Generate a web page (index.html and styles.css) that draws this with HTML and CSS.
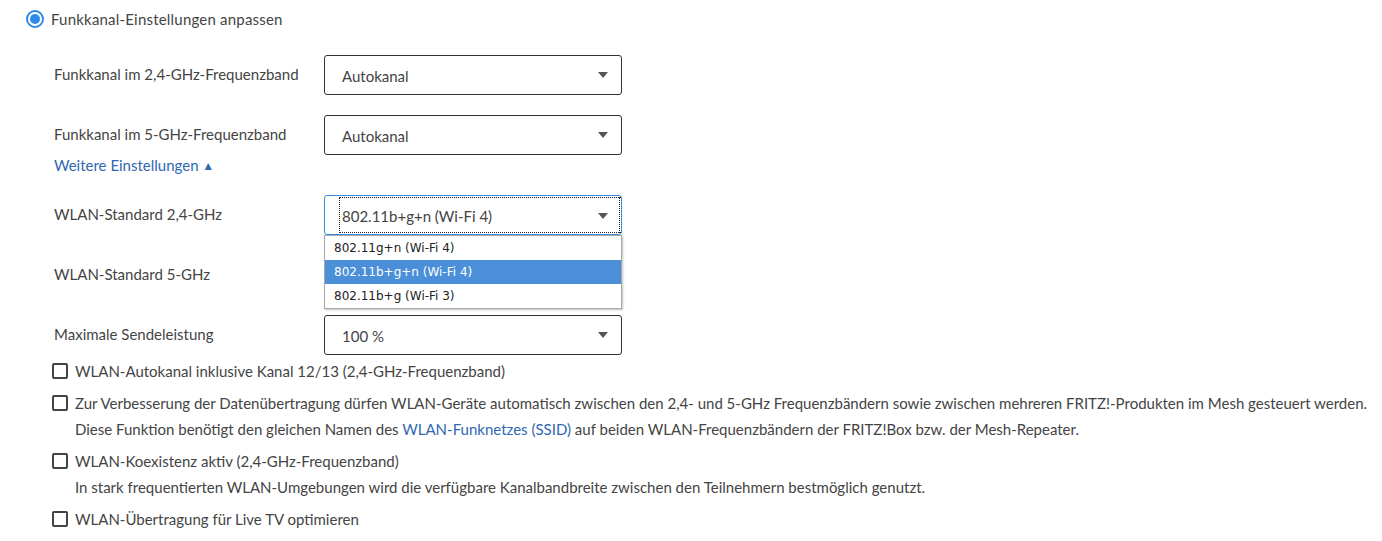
FILE: index.html
```html
<!DOCTYPE html>
<html lang="de">
<head>
<meta charset="utf-8">
<title>WLAN Funkkanal</title>
<link rel="stylesheet" href="styles.css">
</head>
<body>
<div class="page">
  <label class="radio-row">
    <span class="radio"><span class="radio-dot"></span></span>
    <span class="radio-text">Funkkanal-Einstellungen anpassen</span>
  </label>

  <div class="settings">
    <div class="row">
      <span class="label">Funkkanal im 2,4-GHz-Frequenzband</span>
      <div class="select"><span class="select-value">Autokanal</span><span class="arrow"></span></div>
    </div>
    <div class="row">
      <span class="label">Funkkanal im 5-GHz-Frequenzband</span>
      <div class="select"><span class="select-value">Autokanal</span><span class="arrow"></span></div>
    </div>
    <a class="more-link" href="#">Weitere Einstellungen <span class="up">&#9650;</span></a>
    <div class="row row-open">
      <span class="label">WLAN-Standard 2,4-GHz</span>
      <div class="select select-focus"><span class="focus-ring"><span class="select-value">802.11b+g+n (Wi-Fi 4)</span></span><span class="arrow"></span></div>
      <ul class="dropdown">
        <li>802.11g+n (Wi-Fi 4)</li>
        <li class="active">802.11b+g+n (Wi-Fi 4)</li>
        <li>802.11b+g (Wi-Fi 3)</li>
      </ul>
    </div>
    <div class="row">
      <span class="label">WLAN-Standard 5-GHz</span>
      <div class="select"><span class="arrow"></span></div>
    </div>
    <div class="row last">
      <span class="label">Maximale Sendeleistung</span>
      <div class="select"><span class="select-value">100 %</span><span class="arrow"></span></div>
    </div>
  </div>

  <div class="checks">
    <div class="check-item">
      <div class="check-line"><span class="box"></span><span>WLAN-Autokanal inklusive Kanal 12/13 (2,4-GHz-Frequenzband)</span></div>
    </div>
    <div class="check-item">
      <div class="check-line"><span class="box"></span><span>Zur Verbesserung der Datenübertragung dürfen WLAN-Geräte automatisch zwischen den 2,4- und 5-GHz Frequenzbändern sowie zwischen mehreren FRITZ!-Produkten im Mesh gesteuert werden.</span></div>
      <p class="desc">Diese Funktion benötigt den gleichen Namen des <a href="#" class="inline-link">WLAN-Funknetzes (SSID)</a> auf beiden WLAN-Frequenzbändern der FRITZ!Box bzw. der Mesh-Repeater.</p>
    </div>
    <div class="check-item">
      <div class="check-line"><span class="box"></span><span>WLAN-Koexistenz aktiv (2,4-GHz-Frequenzband)</span></div>
      <p class="desc">In stark frequentierten WLAN-Umgebungen wird die verfügbare Kanalbandbreite zwischen den Teilnehmern bestmöglich genutzt.</p>
    </div>
    <div class="check-item">
      <div class="check-line"><span class="box"></span><span>WLAN-Übertragung für Live TV optimieren</span></div>
    </div>
  </div>
</div>
</body>
</html>
```

FILE: styles.css
```css
* { box-sizing: border-box; }
html, body { margin: 0; padding: 0; background: #fff; }
body {
  font-family: "Lato", "Liberation Sans", sans-serif;
  font-size: 15px;
  color: #444;
}
.page { padding: 9px 0 0 26px; position: relative; }

.radio-row { display: flex; align-items: center; gap: 7px; height: 20px; }
.radio-text { letter-spacing: 0.2px; }
.radio {
  width: 18px; height: 18px; border-radius: 50%;
  border: 2px solid #2d8ae6;
  display: flex; align-items: center; justify-content: center;
}
.radio-dot { width: 10px; height: 10px; border-radius: 50%; background: #2d8ae6; }

.settings { padding: 26px 0 0 28px; display: flex; flex-direction: column; }
.row {
  display: grid; grid-template-columns: 270px 298px; align-items: center;
  height: 40px; margin-bottom: 20px; position: relative;
}
.row.last { margin-bottom: 0; }
.label { padding-bottom: 3px; }
.select {
  height: 40px; border: 1px solid #333; border-radius: 3px;
  display: flex; align-items: center; justify-content: space-between;
  padding: 0 13px 0 17px; background: #fff;
}
.select-value { white-space: nowrap; padding-top: 1px; }
.arrow {
  width: 0; height: 0; margin-left: auto;
  border-left: 5.5px solid transparent; border-right: 5.5px solid transparent;
  border-top: 6px solid #555;
}
.select-focus { border-color: #3a8ee0; padding-left: 14px; padding-right: 0; align-items: stretch; position: relative; }
.focus-ring {
  flex: 1; border: 1px dotted #222; border-right: none;
  display: flex; align-items: center; padding-left: 2px; margin: 1px 0;
}
.select-focus .arrow { position: absolute; right: 13px; top: 17px; }
.select-focus::after {
  content: ""; position: absolute; right: 1px; top: 1px; bottom: 1px;
  border-right: 1px dotted #222;
}

.more-link {
  color: #3068b2; text-decoration: none; height: 20px; line-height: 20px;
  margin: -20px 0 20px; align-self: flex-start;
}
.up { font-size: 12px; position: relative; top: -1px; }

.dropdown {
  position: absolute; left: 270px; top: 40px; width: 298px;
  margin: 0; padding: 0; list-style: none; z-index: 2;
  background: #fff; border: 1px solid #a8a8a8;
  box-shadow: 1px 1px 2px rgba(0,0,0,0.25);
  font-family: "DejaVu Sans", "Noto Sans", sans-serif; font-size: 12px;
  color: #222;
}
.dropdown li { height: 24px; line-height: 24px; padding-left: 9px; }
.dropdown li.active { background: #4a8fd8; color: #fff; }

.checks { padding: 3px 0 0 26px; }
.check-item { margin-bottom: 6px; }
.check-line { display: flex; align-items: center; gap: 7px; height: 26px; }
.box {
  width: 16px; height: 16px; border: 2px solid #444; border-radius: 2px; flex: none;
}
.desc { margin: 0; padding-left: 23px; line-height: 26px; }
.inline-link { color: #3068b2; text-decoration: none; }
```
